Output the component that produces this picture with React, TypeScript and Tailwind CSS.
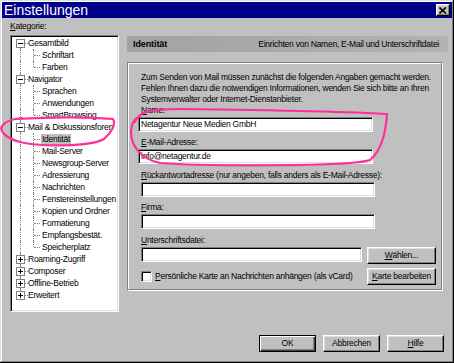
import React from "react";

type Item = { t: string; l: number; e?: "+" | "-"; last?: boolean; sel?: boolean; first?: boolean; lastTop?: boolean };

const tree: Item[] = [
  { t: "Gesamtbild", l: 0, e: "-", first: true },
  { t: "Schriftart", l: 1 },
  { t: "Farben", l: 1, last: true },
  { t: "Navigator", l: 0, e: "-" },
  { t: "Sprachen", l: 1 },
  { t: "Anwendungen", l: 1 },
  { t: "SmartBrowsing", l: 1, last: true },
  { t: "Mail & Diskussionsforen", l: 0, e: "-" },
  { t: "Identität", l: 1, sel: true },
  { t: "Mail-Server", l: 1 },
  { t: "Newsgroup-Server", l: 1 },
  { t: "Adressierung", l: 1 },
  { t: "Nachrichten", l: 1 },
  { t: "Fenstereinstellungen", l: 1 },
  { t: "Kopien und Ordner", l: 1 },
  { t: "Formatierung", l: 1 },
  { t: "Empfangsbestät.", l: 1 },
  { t: "Speicherplatz", l: 1, last: true },
  { t: "Roaming-Zugriff", l: 0, e: "+" },
  { t: "Composer", l: 0, e: "+" },
  { t: "Offline-Betrieb", l: 0, e: "+" },
  { t: "Erweitert", l: 0, e: "+", lastTop: true },
];

const sunken =
  "bg-white border border-t-[#808080] border-l-[#808080] border-b-white border-r-white shadow-[inset_1px_1px_0_#000,inset_-1px_-1px_0_#dfdfdf]";
const raised =
  "bg-[#c0c0c0] border border-t-white border-l-white border-b-black border-r-black shadow-[inset_-1px_-1px_0_#808080,inset_1px_1px_0_#dfdfdf]";

function TreeRow({ it }: { it: Item }) {
  return (
    <div className="relative h-[12px] flex items-center whitespace-nowrap">
      {/* trunk */}
      {it.l === 0 ? (
        <span
          className={
            "absolute left-[8px] w-0 border-l border-dotted border-[#808080] " +
            (it.first ? "top-[6px] bottom-0" : it.lastTop ? "top-0 h-[6px]" : "top-0 bottom-0")
          }
        />
      ) : (
        <span className="absolute left-[8px] top-0 bottom-0 w-0 border-l border-dotted border-[#808080]" />
      )}
      {it.l === 1 && (
        <>
          <span
            className={
              "absolute left-[21px] w-0 border-l border-dotted border-[#808080] " +
              (it.last ? "top-0 h-[6px]" : "top-0 bottom-0")
            }
          />
          <span className="absolute left-[22px] top-[6px] w-[6px] h-0 border-t border-dotted border-[#808080]" />
        </>
      )}
      {it.l === 0 && (
        <>
          <span className="absolute left-[13px] top-[6px] w-[3px] h-0 border-t border-dotted border-[#808080]" />
          <span className="absolute left-[4px] top-[2px] w-[9px] h-[9px] bg-white border border-[#808080]">
            <span className="absolute left-[1px] top-[3px] w-[5px] h-[1px] bg-black" />
            {it.e === "+" && <span className="absolute left-[3px] top-[1px] w-[1px] h-[5px] bg-black" />}
          </span>
        </>
      )}
      {it.l === 0 ? (
        <span className="ml-[16px]">{it.t}</span>
      ) : it.sel ? (
        <span className="ml-[29px] px-[1px] bg-[#c0c0c0] leading-[11px]">{it.t}</span>
      ) : (
        <span className="ml-[30px]">{it.t}</span>
      )}
    </div>
  );
}

function Field({ label, acc, value, w, shift }: { label: string; acc: string; value?: string; w: string; shift?: boolean }) {
  return (
    <div className="flex flex-col">
      <div className="h-[11px] leading-[11px]">
        <u>{acc}</u>
        {label}
      </div>
      <div className={"mt-[1px] h-[15px] flex items-center " + w + " " + sunken + (shift ? " -ml-[3px]" : "")}>
        {value && <span className="pl-[2px]">{value}</span>}
      </div>
    </div>
  );
}

export default function App() {
  return (
    <div className="relative w-[454px] h-[363px] bg-[#c0c0c0] overflow-hidden flex flex-col font-['Liberation_Sans',Arial,sans-serif] text-[8.5px] tracking-[-0.25px] leading-[11px] text-black shadow-[inset_-1px_-1px_0_#000,inset_1px_1px_0_#dfdfdf,inset_-2px_-2px_0_#808080,inset_2px_2px_0_#fff]">
      {/* title bar */}
      <div className="mx-[2px] mt-[2px] h-[16px] bg-[#000088] flex items-center justify-between pl-[2px] pr-[2px]">
        <span className="text-white text-[14px] tracking-normal leading-[16px]">Einstellungen</span>
        <div className={"w-[14px] h-[12px] flex items-center justify-center " + raised}>
          <svg width="8" height="7" viewBox="0 0 8 7">
            <path d="M0.5 0.5 L7 6.5 M7 0.5 L0.5 6.5" stroke="#000" strokeWidth="1.6" />
          </svg>
        </div>
      </div>

      <div className="flex">
        {/* left column */}
        <div className="ml-[10px] pt-[3px] flex flex-col">
          <div className="h-[11px] leading-[11px]">
            <u>K</u>ategorie:
          </div>
          <div
            className={
              "mt-[3px] w-[109px] h-[277px] overflow-hidden pt-[1px] pl-[1px] " + sunken
            }
          >
            {tree.map((it) => (
              <TreeRow key={it.t} it={it} />
            ))}
          </div>
        </div>

        {/* right column */}
        <div className="ml-[8px] mt-[18px] flex flex-col">
          <div className="w-[321px] h-[16px] bg-linear-to-r from-[#a2a2a2] to-[#b2b2b2] flex items-center justify-between pl-[6px] pr-[9px]">
            <span className="font-bold text-[9px] tracking-[-0.1px]">Identität</span>
            <span>Einrichten von Namen, E-Mail und Unterschriftdatei</span>
          </div>

          <div className="mt-[10px] w-[315px] h-[228px] border border-[#808080] shadow-[inset_1px_1px_0_#fff,1px_1px_0_#fff] pl-[13px] pt-[9px] flex flex-col">
            <p className="leading-[11px]">
              Zum Senden von Mail müssen zunächst die folgenden Angaben gemacht werden.
              <br />
              Fehlen Ihnen dazu die notwendigen Informationen, wenden Sie sich bitte an Ihren
              <br />
              Systemverwalter oder Internet-Dienstanbieter.
            </p>
            <Field acc="N" label="ame:" value="Netagentur Neue Medien GmbH" w="w-[235px]" shift />
            <div className="mt-[5px]">
              <Field acc="E" label="-Mail-Adresse:" value="info@netagentur.de" w="w-[235px]" shift />
            </div>
            <div className="mt-[6px]">
              <Field acc="R" label="ückantwortadresse (nur angeben, falls anders als E-Mail-Adresse):" w="w-[234px]" />
            </div>
            <div className="mt-[5px]">
              <Field acc="F" label="irma:" w="w-[234px]" />
            </div>
            <div className="mt-[6px] h-[11px] leading-[11px]">
              <u>U</u>nterschriftsdatei:
            </div>
            <div className="mt-[1px] flex items-start">
              <div className={"w-[221px] h-[15px] " + sunken} />
              <button className={"ml-[5px] w-[69px] h-[17px] flex items-center justify-center " + raised}>
                <span>
                  <u>W</u>ählen...
                </span>
              </button>
            </div>
            <div className="mt-[4px] flex items-center">
              <div className="w-[226px] flex items-center">
                <span className={"w-[11px] h-[11px] " + sunken} />
                <span className="ml-[3px]">
                  <u>P</u>ersönliche Karte an Nachrichten anhängen (als vCard)
                </span>
              </div>
              <button className={"w-[69px] h-[17px] flex items-center justify-center " + raised}>
                <span>
                  <u>K</u>arte bearbeiten
                </span>
              </button>
            </div>
          </div>
        </div>
      </div>

      {/* bottom buttons */}
      <div className="mt-auto pb-[11px] pr-[10px] flex justify-end gap-[7px]">
        <button className="w-[57px] h-[17px] flex items-center justify-center bg-[#c0c0c0] border border-black shadow-[inset_1px_1px_0_#fff,inset_-1px_-1px_0_#404040,inset_-2px_-2px_0_#808080]">
          OK
        </button>
        <button className={"w-[57px] h-[17px] flex items-center justify-center " + raised}>Abbrechen</button>
        <button className={"w-[57px] h-[17px] flex items-center justify-center " + raised}>
          <span>
            <u>H</u>ilfe
          </span>
        </button>
      </div>

      {/* hand-drawn pink markings */}
      <svg className="absolute inset-0 pointer-events-none" width="454" height="363" viewBox="0 0 454 363">
        <path
          d="M16 119 C50 117 90 117 113 119 C116 124 112 132 104 139 C90 147 40 147 20 142 C5 138 -2 130 3 125 C6 121 12 119 22 118"
          fill="none"
          stroke="#ff2e9a"
          strokeWidth="2.2"
          strokeLinecap="round"
        />
        <path
          d="M135 122 C138 112 150 109 180 109 C260 110 340 111 387 114 C386 130 382 150 370 160 C350 167 200 166 160 163 C140 159 131 145 131 132 C131 124 134 119 140 116"
          fill="none"
          stroke="#ff2e9a"
          strokeWidth="2.2"
          strokeLinecap="round"
        />
      </svg>
    </div>
  );
}
